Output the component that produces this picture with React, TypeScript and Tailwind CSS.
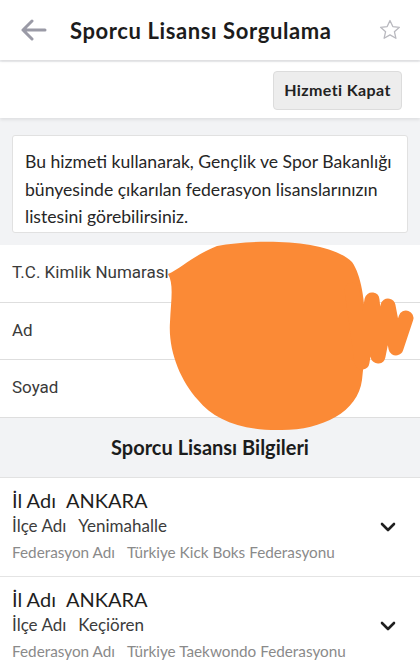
import React from "react";

function Blob() {
  return (
    <svg
      className="absolute left-0 top-0 pointer-events-none"
      width="420"
      height="660"
      viewBox="0 0 420 660"
    >
      <path
        d="M217 246 C260 238 330 240 352 262 C366 282 368 330 362 380 C358 412 322 430 282 430 C242 431 214 420 198 400 C180 380 168 350 170 322 C171 300 174 284 168 274 C182 268 192 256 217 246 Z"
        fill="#fb8a36"
      />
      <polyline
        points="352,290 362,362 372,300 378,356 388,306 396,348 406,318"
        fill="none"
        stroke="#fb8a36"
        strokeWidth="15"
        strokeLinecap="round"
        strokeLinejoin="round"
      />
    </svg>
  );
}

function Chevron() {
  return (
    <svg width="16" height="10" viewBox="0 0 16 10" className="shrink-0">
      <path d="M2 2 L8 8 L14 2" fill="none" stroke="#1f1f1f" strokeWidth="2.6" strokeLinecap="round" strokeLinejoin="round" />
    </svg>
  );
}

function Card({ ilce, fed }: { ilce: string; fed: string }) {
  return (
    <div className="flex h-[99px] items-center border-b border-[#e4e4e4] bg-white pl-3 pr-[24px]">
      <div className="flex flex-1 flex-col">
        <div className="flex h-[26px] items-center text-[20px] text-[#1e1e1e]">
          <span>İl Adı</span>
          <span className="ml-[10px]">ANKARA</span>
        </div>
        <div className="flex h-[26px] items-center text-[17px] text-[#3c3c3c]">
          <span>İlçe Adı</span>
          <span className="ml-[12px]">{ilce}</span>
        </div>
        <div className="flex h-[28px] items-center text-[15.3px] text-[#8a8a8a]">
          <span>Federasyon Adı</span>
          <span className="ml-[12px]">{fed}</span>
        </div>
      </div>
      <Chevron />
    </div>
  );
}

export default function App() {
  return (
    <div className="relative h-[660px] w-[420px] overflow-hidden bg-[#f2f3f5] font-['Lato',sans-serif]">
      {/* Header */}
      <div className="relative z-10 flex h-[60px] items-center bg-white shadow-[0_1px_3px_rgba(0,0,0,0.12)]">
        <div className="ml-[20px] flex w-[27px] items-center">
          <svg width="27" height="22" viewBox="0 0 27 22">
            <path d="M25 11 H3 M12 2 L3 11 L12 20" fill="none" stroke="#9a9aa6" strokeWidth="3" strokeLinecap="round" strokeLinejoin="round" />
          </svg>
        </div>
        <div className="ml-[23px] flex-1 text-[22px] font-bold tracking-[0.6px] text-[#1c1c1c]">Sporcu Lisansı Sorgulama</div>
        <div className="mr-[18px]">
          <svg width="24" height="24" viewBox="0 0 24 24">
            <path
              d="M12 2.5 L14.8 8.6 L21.4 9.3 L16.4 13.7 L17.9 20.3 L12 16.9 L6.1 20.3 L7.6 13.7 L2.6 9.3 L9.2 8.6 Z"
              fill="none"
              stroke="#b9b9bf"
              strokeWidth="1.3"
              strokeLinejoin="round"
            />
          </svg>
        </div>
      </div>

      {/* Action bar */}
      <div className="relative mt-[2px] flex h-[56px] items-center justify-end bg-white pr-[18px] shadow-[0_2px_3px_rgba(0,0,0,0.08)]">
        <button className="flex h-[39px] w-[129px] items-center justify-center rounded-[4px] border border-[#dcdcdc] bg-[#ededed] text-[16px] font-bold tracking-[0.4px] text-[#222]">
          Hizmeti Kapat
        </button>
      </div>

      {/* Info */}
      <div className="px-3 pb-[12px] pt-[17px]">
        <div className="rounded-[3px] border border-[#e1e1e1] bg-white pb-[1px] pl-[12px] pr-[6px] pt-[12px] text-[17.6px] leading-[27.5px] text-[#262626]">
          Bu hizmeti kullanarak, Gençlik ve Spor Bakanlığı bünyesinde çıkarılan federasyon lisanslarınızın listesini görebilirsiniz.
        </div>
      </div>

      {/* Fields */}
      <div className="bg-white font-['Roboto',sans-serif] text-[17px] text-[#3a3a3a]">
        <div className="flex h-[58px] items-center border-b border-[#dedede] px-3">T.C. Kimlik Numarası</div>
        <div className="flex h-[57px] items-center border-b border-[#dedede] px-3">Ad</div>
        <div className="flex h-[58px] items-center border-b border-[#dedede] px-3">Soyad</div>
      </div>

      {/* Section */}
      <div className="flex h-[60px] items-center justify-center border-b border-[#e2e2e2] text-[20px] font-bold text-[#1c1c1c]">
        Sporcu Lisansı Bilgileri
      </div>

      <Card ilce="Yenimahalle" fed="Türkiye Kick Boks Federasyonu" />
      <Card ilce="Keçiören" fed="Türkiye Taekwondo Federasyonu" />

      <Blob />
    </div>
  );
}
